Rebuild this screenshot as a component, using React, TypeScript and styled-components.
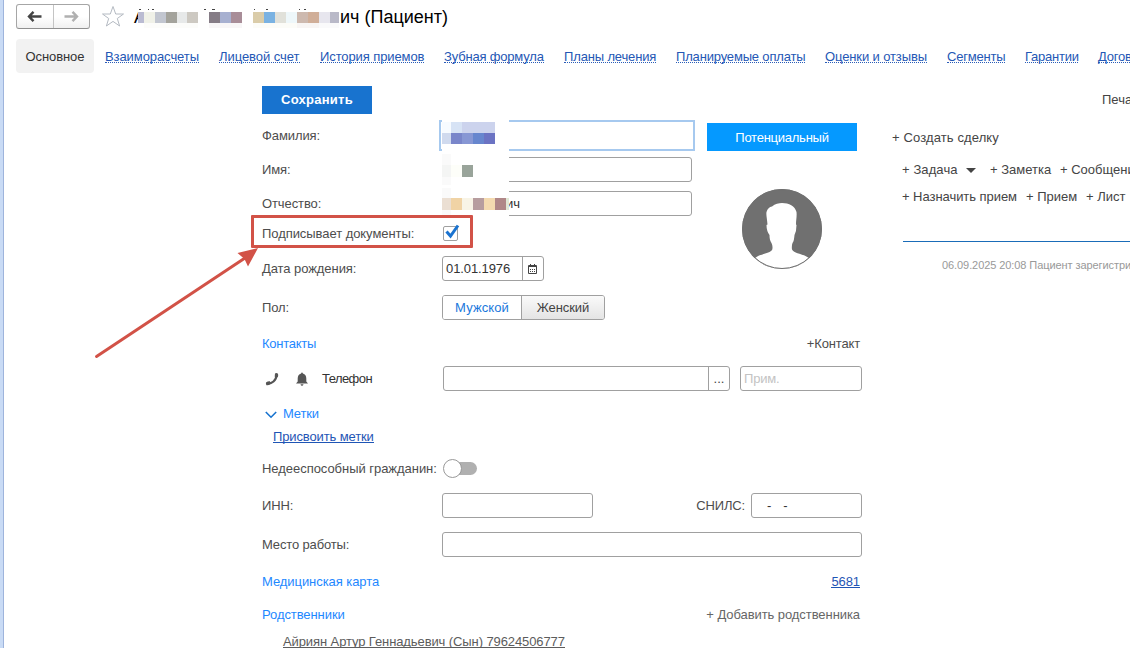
import React from 'react';
import styled, { createGlobalStyle } from 'styled-components';

const Global = createGlobalStyle`
  * { box-sizing: border-box; }
  body { margin: 0; background: #fff; overflow: hidden; }
`;

const Page = styled.div`
  position: relative;
  width: 1130px;
  height: 648px;
  overflow: hidden;
  background: #fff;
  border-left: 3px solid #c9dbf5;
  box-shadow: inset 1px 0 0 #9eb4dc;
  font: 13px/16px "Liberation Sans", Arial, sans-serif;
  color: #4d4d4d;
  white-space: nowrap;
  svg { flex: none; }
`;

const Header = styled.header`
  display: flex;
  align-items: center;
  height: 34px;
  padding-left: 13px;
`;
const History = styled.div`
  display: flex;
  width: 74px;
  height: 25px;
  margin-top: -2px;
  border: 1px solid #a6a6a6;
  border-bottom-color: #8f8f8f;
  border-radius: 3px;
  background: linear-gradient(#fff 50%, #f0f0f0);
`;
const HistoryButton = styled.div`
  flex: 1;
  display: flex;
  align-items: center;
  justify-content: center;
  & + & { border-left: 1px solid #c4c4c4; }
`;
const Star = styled.svg`
  margin: -2px 0 0 11px;
`;
const Title = styled.h1`
  position: relative;
  display: flex;
  justify-content: space-between;
  width: 314px;
  margin: -1px 0 0 9px;
  font-size: 18px;
  line-height: 24px;
  font-weight: 400;
  color: #000;
`;
const Accent = styled.i<{ $x: number; $w: number }>`
  position: absolute;
  left: ${p => p.$x}px;
  top: 4px;
  width: ${p => p.$w}px;
  height: 1px;
  background: #444;
`;

const Mosaic = styled.div<{ $x: number; $y: number; $w: number; $h: number }>`
  position: absolute;
  left: ${p => p.$x}px;
  top: ${p => p.$y}px;
  width: ${p => p.$w}px;
  height: ${p => p.$h}px;
  background: #fff;
`;
const MosaicRow = styled.div<{ $h: number; $top?: number }>`
  display: flex;
  height: ${p => p.$h}px;
  margin-top: ${p => p.$top ?? 0}px;
`;
const Cell = styled.i<{ $c: string; $w?: number }>`
  width: ${p => p.$w ?? 11}px;
  background: ${p => p.$c};
`;

const Tabs = styled.nav`
  display: flex;
  align-items: center;
  height: 34px;
  margin: 5px 0 0 13px;
`;
const ActiveTab = styled.div`
  flex: none;
  width: 78px;
  height: 34px;
  margin-right: 11px;
  border-radius: 4px;
  background: #f2f2f2;
  color: #333;
  line-height: 35px;
  text-align: center;
  letter-spacing: -0.1px;
`;
const Tab = styled.a<{ $w: number; $ls?: number }>`
  flex: none;
  width: ${p => p.$w}px;
  height: 14px;
  margin-right: 20px;
  line-height: 15px;
  border-bottom: 1px dotted #2a5db8;
  color: #2457b5;
  letter-spacing: ${p => p.$ls ?? 0}px;
`;

const Toolbar = styled.div`
  display: flex;
  align-items: center;
  justify-content: space-between;
  height: 28px;
  margin: 13px 0 0 259px;
`;
const SaveButton = styled.button`
  width: 110px;
  height: 28px;
  padding: 0;
  border: 0;
  background: #1873cf;
  color: #fff;
  font: bold 13px/28px "Liberation Sans", Arial, sans-serif;
  letter-spacing: 0.25px;
`;
const Print = styled.div`
  width: 28px;
  overflow: hidden;
  color: #444;
`;

const Body = styled.div`
  display: flex;
  margin: 6px 0 0 259px;
`;
const Form = styled.main`
  flex: none;
  width: 600px;
`;
const Top = styled.div`
  display: flex;
  height: 200px;
`;
const TopFields = styled.div`
  width: 433px;
`;
const Row = styled.div<{ $h?: number; $gap?: number }>`
  position: relative;
  display: flex;
  align-items: center;
  height: ${p => p.$h ?? 25}px;
  margin-top: ${p => p.$gap ?? 0}px;
`;
const Label = styled.label<{ $ls?: number }>`
  flex: none;
  width: 180px;
  letter-spacing: ${p => p.$ls ?? -0.1}px;
`;
const Text = styled.span<{ $ls?: number; $c?: string; $ml?: string; $mr?: number }>`
  letter-spacing: ${p => p.$ls ?? -0.1}px;
  color: ${p => p.$c ?? 'inherit'};
  margin-left: ${p => p.$ml ?? '0'};
  margin-right: ${p => p.$mr ?? 0}px;
`;
const Link = styled.a<{ $ls?: number; $c?: string; $ml?: string; $mr?: number }>`
  height: 14px;
  margin-top: -1px;
  line-height: 15px;
  letter-spacing: ${p => p.$ls ?? -0.1}px;
  color: ${p => p.$c ?? '#1f55b5'};
  margin-left: ${p => p.$ml ?? '0'};
  margin-right: ${p => p.$mr ?? 0}px;
  border-bottom: 1px solid;
`;
const Field = styled.div<{ $w: number; $ml?: string }>`
  display: flex;
  flex: none;
  align-items: center;
  width: ${p => p.$w}px;
  height: 25px;
  margin-left: ${p => p.$ml ?? '0'};
  padding-left: 3px;
  border: 1px solid #a0a0a0;
  border-radius: 3px;
  background: #fff;
  color: #333;
`;
const FocusedField = styled.div`
  width: 256px;
  height: 31px;
  margin-left: -3px;
  border: 2px solid #a6c9ef;
`;
const FieldButton = styled.div`
  display: flex;
  align-items: center;
  justify-content: center;
  width: 21px;
  height: 23px;
  margin-left: auto;
  border-left: 1px solid #a0a0a0;
  color: #444;
`;
const Checkbox = styled.div`
  width: 15px;
  height: 15px;
  margin-left: 1px;
  border: 1px solid #a0a0a0;
  border-radius: 2px;
  svg { display: block; overflow: visible; }
`;
const Segmented = styled.div`
  display: flex;
  width: 163px;
  height: 25px;
  border: 1px solid #a0a0a0;
  border-radius: 3px;
  overflow: hidden;
`;
const Segment = styled.div<{ $active?: boolean; $ls: number }>`
  width: ${p => (p.$active ? 78 : 83)}px;
  line-height: 23px;
  text-align: center;
  letter-spacing: ${p => p.$ls}px;
  color: ${p => (p.$active ? '#1a78dc' : '#444')};
  background: ${p => (p.$active ? '#fff' : 'linear-gradient(#fafafa, #e4e4e4)')};
  & + & { border-left: 1px solid #a0a0a0; }
`;
const Toggle = styled.div`
  display: flex;
  align-items: center;
  width: 33px;
  height: 13px;
  margin-left: 2px;
  border-radius: 7px;
  background: #b0b0b0;
`;
const Knob = styled.div`
  flex: none;
  width: 19px;
  height: 19px;
  margin-left: -1px;
  border: 1px solid #999;
  border-radius: 50%;
  background: #fff;
`;
const ContactKind = styled.div`
  display: flex;
  flex: none;
  align-items: center;
  width: 181px;
  padding-left: 3px;
`;
const BellIcon = styled.svg`
  margin: 0 14px 0 17px;
`;
const ChevronIcon = styled.svg`
  margin: 1px 6px 0 3px;
`;

const Aside = styled.aside`
  width: 150px;
  margin: 3px 0 0 12px;
`;
const Status = styled.div`
  height: 28px;
  background: #0599ff;
  color: #fff;
  line-height: 29px;
  text-align: center;
  letter-spacing: -0.25px;
`;
const Avatar = styled.svg`
  display: block;
  margin: 38px auto 0;
`;

const Activity = styled.section`
  flex: none;
  width: 268px;
  padding: 5px 0 0 27px;
`;
const Actions = styled.div<{ $h: number; $ml?: number }>`
  display: flex;
  align-items: center;
  height: ${p => p.$h}px;
  margin-left: ${p => p.$ml ?? 13}px;
`;
const Action = styled.span<{ $w: number; $ls?: number }>`
  flex: none;
  width: ${p => p.$w}px;
  letter-spacing: ${p => p.$ls ?? 0}px;
  color: #444;
`;
const Caret = styled.i`
  margin: 0 14px 0 4px;
  border: 5px solid transparent;
  border-top-color: #444;
  border-bottom: 0;
`;
const Divider = styled.div`
  height: 1px;
  margin: 36px 0 0 14px;
  background: #1a6cb8;
`;
const LogEntry = styled.div`
  margin: 15px 0 0 53px;
  font-size: 11px;
  letter-spacing: -0.08px;
  color: #999;
`;

const Highlight = styled.div`
  position: absolute;
  left: 248px;
  top: 215px;
  width: 222px;
  height: 33px;
  border: 3px solid #d25247;
  border-radius: 1px;
`;
const Arrow = styled.svg`
  position: absolute;
  left: 87px;
  top: 240px;
`;

const tabs: [string, number, number][] = [
  ['Взаиморасчеты', 94, -0.08],
  ['Лицевой счет', 81, -0.05],
  ['История приемов', 104, -0.1],
  ['Зубная формула', 100, -0.18],
  ['Планы лечения', 92, -0.15],
  ['Планируемые оплаты', 129, -0.17],
  ['Оценки и отзывы', 102, -0.12],
  ['Сегменты', 58, -0.2],
  ['Гарантии', 53, -0.25],
  ['Договоры', 60, -0.2],
];

const titleCells: [string, number][] = [
  ['#babbd2', 6], ['#f0f1e8', 11], ['#c2c6d0', 11], ['#a4a39c', 11], ['#e7e9e9', 10], ['#cdc9c2', 11], ['#fff', 11],
  ['#857c86', 11], ['#a7b0d0', 11], ['#a88d98', 11], ['#fff', 11], ['#dacca9', 11], ['#7ab2e2', 11], ['#e1e1da', 11],
  ['#eef7fa', 11], ['#cdb9af', 11], ['#d0ae98', 11], ['#e7e6ee', 11], ['#b9b9c8', 9],
];
const faintCells: [string, number][] = [
  ['#fff', 6], ['#fcfcfa', 54], ['#fff', 11], ['#f8f6f7', 33], ['#fff', 11], ['#fcfcf8', 44], ['#f8f5f4', 22], ['#fafafb', 20],
];
const accents: [number, number][] = [[5, 2], [14, 1], [18, 2], [70, 2], [78, 3], [120, 1], [132, 2], [165, 1], [170, 2]];

const Cells = ({ list }: { list: [string, number][] }) => (
  <>{list.map(([c, w], i) => <Cell key={i} $c={c} $w={w} />)}</>
);

export default function App() {
  return (
    <Page>
      <Global />
      <Header>
        <History>
          <HistoryButton>
            <svg width="15" height="11" viewBox="0 0 15 11"><path d="M6.500.8 2 5.500l4.500 4.700M2.500 5.500H14.500" fill="none" stroke="#444" strokeWidth="2.400" /></svg>
          </HistoryButton>
          <HistoryButton>
            <svg width="15" height="11" viewBox="0 0 15 11"><path d="m8.500.8 4.500 4.700-4.500 4.700M12.500 5.500H.5" fill="none" stroke="#b0b0b0" strokeWidth="2.400" /></svg>
          </HistoryButton>
        </History>
        <Star width="24" height="23" viewBox="0 0 24 23">
          <path d="M12 1.500 14.700 9H22.500L16.300 13.500 18.600 21 12 16.400 5.400 21 7.700 13.500 1.500 9H9.300Z" fill="#fff" stroke="#b4bac2" />
        </Star>
        <Title>
          <span>А</span>
          <span>ич (Пациент)</span>
          <Mosaic $x={4} $y={5} $w={201} $h={17}>
            <MosaicRow $h={11} $top={2}><Cells list={titleCells} /></MosaicRow>
            <MosaicRow $h={5}><Cells list={faintCells} /></MosaicRow>
          </Mosaic>
          {accents.map(([x, w]) => <Accent key={x} $x={x} $w={w} />)}
        </Title>
      </Header>

      <Tabs>
        <ActiveTab>Основное</ActiveTab>
        {tabs.map(([t, w, ls]) => <Tab key={t} $w={w} $ls={ls}>{t}</Tab>)}
      </Tabs>

      <Toolbar>
        <SaveButton>Сохранить</SaveButton>
        <Print>Печать</Print>
      </Toolbar>

      <Body>
        <Form>
          <Top>
            <TopFields>
              <Row $h={31}>
                <Label>Фамилия:</Label>
                <FocusedField />
                <Mosaic $x={180} $y={0} $w={67} $h={31}>
                  <MosaicRow $h={11} $top={2}><Cells list={[['#f7fbff', 9], ['#d7e3f5', 11], ['#ccd3ed', 33]]} /></MosaicRow>
                  <MosaicRow $h={11}><Cells list={[['#d0daee', 9], ['#7986ca', 11], ['#8797d4', 11], ['#6786ce', 11], ['#6b73c3', 11]]} /></MosaicRow>
                </Mosaic>
              </Row>
              <Row $gap={6}>
                <Label>Имя:</Label>
                <Field $w={250} />
                <Mosaic $x={180} $y={-3} $w={67} $h={31}>
                  <MosaicRow $h={11}><Cells list={[['#fafafa', 9]]} /></MosaicRow>
                  <MosaicRow $h={12}><Cells list={[['#f4f5f4', 9], ['#fdfef9', 11], ['#99a49a', 11]]} /></MosaicRow>
                  <MosaicRow $h={8}><Cells list={[['#fafafa', 9]]} /></MosaicRow>
                </Mosaic>
              </Row>
              <Row $gap={9}>
                <Label>Отчество:</Label>
                <Field $w={250}><Text $ml="60px">ич</Text></Field>
                <Mosaic $x={180} $y={-3} $w={67} $h={31}>
                  <MosaicRow $h={10}><Cells list={[['#fafafa', 9]]} /></MosaicRow>
                  <MosaicRow $h={12}><Cells list={[['#ebdfd3', 9], ['#f0d3a5', 11], ['#f8f4e6', 11], ['#b79d9f', 11], ['#f4dab0', 11], ['#b08788', 11], ['#e1e8d6', 3]]} /></MosaicRow>
                  <MosaicRow $h={5}><Cells list={[['#fafafa', 9]]} /></MosaicRow>
                </Mosaic>
              </Row>
              <Row $gap={5}>
                <Label $ls={-0.06}>Подписывает документы:</Label>
                <Checkbox>
                  <svg width="13" height="13" viewBox="0 0 13 13"><path d="m2.500 4.500 4 4.500L14-1.500" fill="none" stroke="#1a73d0" strokeWidth="3" /></svg>
                </Checkbox>
              </Row>
              <Row $gap={10}>
                <Label $ls={-0.07}>Дата рождения:</Label>
                <Field $w={102}>
                  <Text>01.01.1976</Text>
                  <FieldButton>
                    <svg width="10" height="10" viewBox="0 0 10 10">
                      <path d="M.5 1.500h8v8h-8zM.5 2.500h8M2.500 0v2M6.500 0v2" fill="none" stroke="#444" />
                      <path d="M2 5.500h6M2 7.500h6" stroke="#444" strokeDasharray="1 1" />
                    </svg>
                  </FieldButton>
                </Field>
              </Row>
              <Row $gap={14}>
                <Label>Пол:</Label>
                <Segmented>
                  <Segment $active $ls={0.1}>Мужской</Segment>
                  <Segment $ls={-0.1}>Женский</Segment>
                </Segmented>
              </Row>
            </TopFields>
            <Aside>
              <Status>Потенциальный</Status>
              <Avatar width="80" height="80" viewBox="0 0 80 80">
                <circle cx="40" cy="40" r="40" fill="#707070" />
                <path d="M13 69C18 64.500 28 65 30.300 60.500Q31 57 29.500 54C28 52 27.500 49 27.500 46Q24.500 42 24.500 36L25.500 35.500C25 29 24 26 24.500 23Q26 18 30 17.500C33 14.500 37 14 40 14C47 14 53 17 54.500 23C55 27 54 31 54 35.500L54.500 36Q54.500 42 52.500 46C52 50 52 52 50.500 54Q49.500 57 50 60.500C52.500 65 61 64.500 67 69A39 39 0 0 1 13 69Z" fill="#fff" />
                <circle cx="40" cy="40" r="39.500" fill="none" stroke="#707070" />
              </Avatar>
            </Aside>
          </Top>

          <Row $gap={11}>
            <Text $c="#1e88ff" $ls={-0.25}>Контакты</Text>
            <Text $ml="auto" $mr={2} $ls={-0.15}>+Контакт</Text>
          </Row>
          <Row $gap={10}>
            <ContactKind>
              <svg width="14" height="14" viewBox="0 0 14 14">
                <path d="M2.500 11.500C6.500 12 11.500 8.500 11.500 2.800" fill="none" stroke="#555" strokeWidth="2.200" />
                <path d="M10 1.500Q11.500.6 13 1.800 13.500 3.500 12.800 5.200L9.700 4.800ZM1 10.500Q3 9 5 9.300L5.500 12Q3.500 13.600 1.500 13.200.6 12 1 10.500Z" fill="#555" />
              </svg>
              <BellIcon width="12" height="14" viewBox="0 0 12 14">
                <path d="M6 .5Q6.800.5 6.900 1.500Q10.300 2.500 10.300 6.500V9.500L12 11.500H0L1.700 9.500V6.500Q1.700 2.500 5.100 1.500Q5.200.5 6 .5ZM4.500 12.200h3Q7.200 13.700 6 13.700 4.800 13.700 4.500 12.200Z" fill="#555" />
              </BellIcon>
              <Text $c="#333" $ls={-0.55}>Телефон</Text>
            </ContactKind>
            <Field $w={287}><FieldButton>...</FieldButton></Field>
            <Field $w={122} $ml="auto"><Text $c="#c3c3c3" $ls={-0.2}>Прим.</Text></Field>
          </Row>
          <Row $gap={11} $h={24}>
            <ChevronIcon width="12" height="8" viewBox="0 0 12 8"><path d="m.8 1 5.200 5.200L11.200 1" fill="none" stroke="#1873cf" strokeWidth="1.600" /></ChevronIcon>
            <Text $c="#1e88ff" $ls={-0.15}>Метки</Text>
          </Row>
          <Row $h={20}>
            <Link $ml="11px" $ls={-0.12}>Присвоить метки</Link>
          </Row>
          <Row $gap={10}>
            <Label $ls={-0.04}>Недееспособный гражданин:</Label>
            <Toggle><Knob /></Toggle>
          </Row>
          <Row $gap={12}>
            <Label>ИНН:</Label>
            <Field $w={151} />
            <Text $ml="auto" $ls={-0.15}>СНИЛС:</Text>
            <Field $w={111} $ml="6px"><Text $ml="12px">-</Text><Text $ml="12px">-</Text></Field>
          </Row>
          <Row $gap={14}>
            <Label $ls={-0.14}>Место работы:</Label>
            <Field $w={420} />
          </Row>
          <Row $gap={12}>
            <Text $c="#1e88ff" $ls={-0.06}>Медицинская карта</Text>
            <Link $ml="auto" $mr={2}>5681</Link>
          </Row>
          <Row $gap={8}>
            <Text $c="#1e88ff" $ls={-0.08}>Родственники</Text>
            <Text $ml="auto" $mr={2} $c="#666" $ls={-0.07}>+ Добавить родственника</Text>
          </Row>
          <Row $gap={2}>
            <Link $ml="21px" $c="#5c5c5c" $ls={-0.1}>Айриян Артур Геннадьевич (Сын) 79624506777</Link>
          </Row>
        </Form>

        <Activity>
          <Actions $h={26} $ml={3}><Action $w={110} $ls={0.12}>+ Создать сделку</Action></Actions>
          <Actions $h={38}><Action $w={60} $ls={0.1}>+ Задача</Action><Caret /><Action $w={70}>+ Заметка</Action><Action $w={90}>+ Сообщение</Action></Actions>
          <Actions $h={16}><Action $w={124} $ls={-0.05}>+ Назначить прием</Action><Action $w={60}>+ Прием</Action><Action $w={90}>+ Лист</Action></Actions>
          <Divider />
          <LogEntry>06.09.2025 20:08 Пациент зарегистрирован</LogEntry>
        </Activity>
      </Body>

      <Highlight />
      <Arrow width="175" height="125" viewBox="0 0 175 125">
        <path d="M6.500 116.500 155 18" fill="none" stroke="#d25247" strokeWidth="3" strokeLinecap="round" />
        <path d="M168 8 158 26.500 154.500 19 147.500 13Z" fill="#d25247" />
      </Arrow>
    </Page>
  );
}
